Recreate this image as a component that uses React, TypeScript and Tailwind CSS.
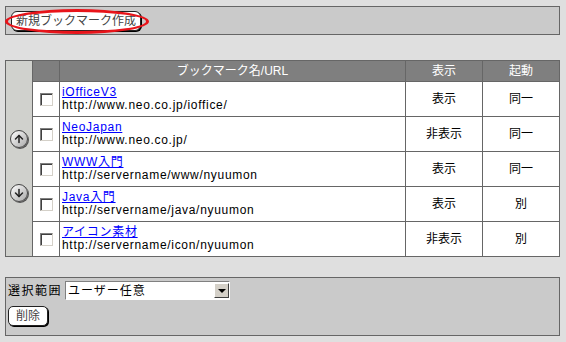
import { ArrowUp, ArrowDown } from "lucide-react";

const rows = [
  { name: "iOfficeV3", url: "http://www.neo.co.jp/ioffice/", show: "表示", mode: "同一" },
  { name: "NeoJapan", url: "http://www.neo.co.jp/", show: "非表示", mode: "同一" },
  { name: "WWW入門", url: "http://servername/www/nyuumon", show: "表示", mode: "同一" },
  { name: "Java入門", url: "http://servername/java/nyuumon", show: "表示", mode: "別" },
  { name: "アイコン素材", url: "http://servername/icon/nyuumon", show: "非表示", mode: "別" },
];

const font = { fontFamily: '"Liberation Sans", "Noto Sans CJK JP", sans-serif' };

const Check = () => (
  <span className="mx-auto block h-[13px] w-[13px] border border-t-[#808080] border-l-[#808080] border-r-[#d4d0c8] border-b-[#d4d0c8] bg-white shadow-[inset_1px_1px_0_#404040]" />
);

const RoundBtn = ({ children }: { children: React.ReactNode }) => (
  <span className="flex h-[18px] w-[18px] items-center justify-center rounded-full border border-[#444] bg-gradient-to-br from-white to-[#aaa] text-[#222] shadow-[1px_1px_0_#555]">
    {children}
  </span>
);

export default function App() {
  return (
    <div className="min-h-[342px] w-[566px] bg-[#dfdfdf] pl-[5px] pr-[6px] pt-[6px] text-[12px] text-black" style={font}>
      <div className="relative flex h-[29px] items-center border border-[#666] bg-[#cacaca] px-[5px]">
        <button className="flex h-[20px] w-[130px] items-center justify-center rounded-[6px] border border-[#222] bg-white text-[12px] leading-none text-[#444] shadow-[1px_1px_0_#000]">
          新規ブックマーク作成
        </button>
        <span className="pointer-events-none absolute left-[-1px] top-[2px] h-[25px] w-[144px] rounded-[50%] border-[3px] border-[#e8141a]" />
      </div>

      <table className="mt-[25px] w-full border-collapse border border-[#666]">
        <thead>
          <tr className="h-[21px] bg-[#7f7f7f] text-white">
            <th className="w-[27px] border border-[#666] bg-[#d0d1cd] p-0" rowSpan={6}>
              <div className="flex h-[195px] flex-col items-center justify-center gap-[36px] pt-[14px]">
                <RoundBtn>
                  <ArrowUp size={12} strokeWidth={3} />
                </RoundBtn>
                <RoundBtn>
                  <ArrowDown size={12} strokeWidth={3} />
                </RoundBtn>
              </div>
            </th>
            <th className="w-[27px] border border-[#666] p-0" />
            <th className="border border-[#666] p-0 font-normal">ブックマーク名/URL</th>
            <th className="w-[77px] border border-[#666] p-0 font-normal">表示</th>
            <th className="w-[77px] border border-[#666] p-0 font-normal">起動</th>
          </tr>
          {rows.map((r) => (
            <tr key={r.name} className="h-[35px] bg-white">
              <td className="border border-[#666] p-0">
                <Check />
              </td>
              <td className="border border-[#666] px-[2px] py-0 leading-[13px] tracking-[0.7px]">
                <a href="#" className="text-[#0000ff] underline">
                  {r.name}
                </a>
                <div>{r.url}</div>
              </td>
              <td className="border border-[#666] p-0 text-center">{r.show}</td>
              <td className="border border-[#666] p-0 text-center">{r.mode}</td>
            </tr>
          ))}
        </thead>
      </table>

      <div className="mt-[20px] flex h-[59px] flex-col gap-[6px] border border-[#666] bg-[#cacaca] px-[2px] pt-[3px]">
        <div className="flex items-center gap-[3px]">
          <span className="tracking-[1.5px]">選択範囲</span>
          <div className="flex h-[19px] w-[165px] items-center border border-t-[#808080] border-l-[#808080] border-r-white border-b-white bg-white">
            <span className="flex-1 pl-[2px] tracking-[1px]">ユーザー任意</span>
            <span className="flex h-[15px] w-[15px] items-center justify-center border border-t-white border-l-white border-r-[#404040] border-b-[#404040] bg-[#d4d0c8]">
              <span className="h-0 w-0 border-x-[4px] border-t-[4px] border-x-transparent border-t-black" />
            </span>
          </div>
        </div>
        <button className="flex h-[20px] w-[40px] items-center justify-center rounded-[5px] border border-[#222] bg-white text-[12px] leading-none text-[#444] shadow-[1px_1px_0_#000]">
          削除
        </button>
      </div>
    </div>
  );
}
